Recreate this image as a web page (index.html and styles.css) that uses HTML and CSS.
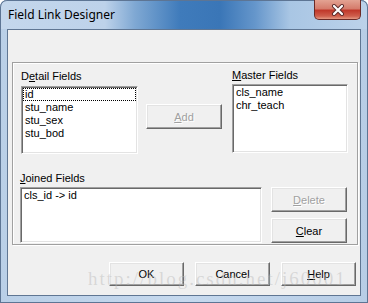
FILE: index.html
```html
<!DOCTYPE html>
<html lang="en">
<head>
    <meta charset="UTF-8">
    <title>Field Link Designer</title>
    <link rel="stylesheet" href="styles.css">
</head>
<body>

    <div class="window">
        <!-- title bar -->
        <div class="titlebar">
            <span class="title">Field Link Designer</span>
            <div class="close">
                <svg width="14" height="12" viewBox="0 0 14 12">
                    <path d="M3 2 L11 10 M11 2 L3 10" stroke="#5a2b2b" stroke-width="4" stroke-linecap="round"/>
                    <path d="M3 2 L11 10 M11 2 L3 10" stroke="#fff" stroke-width="2.2" stroke-linecap="round"/>
                </svg>
            </div>
        </div>

        <!-- client area -->
        <div class="client">
            <div class="panel">
                <div class="row top">
                    <div class="col detail">
                        <div class="label">D<u>e</u>tail Fields</div>
                        <div class="list detail-list">
                            <div class="item focus">id</div>
                            <div class="item">stu_name</div>
                            <div class="item">stu_sex</div>
                            <div class="item">stu_bod</div>
                        </div>
                    </div>
                    <button class="btn add" disabled><u>A</u>dd</button>
                    <div class="col master">
                        <div class="label"><u>M</u>aster Fields</div>
                        <div class="list master-list">
                            <div class="item">cls_name</div>
                            <div class="item">chr_teach</div>
                        </div>
                    </div>
                </div>
                <div class="row bottom">
                    <div class="col joined">
                        <div class="label"><u>J</u>oined Fields</div>
                        <div class="list joined-list">
                            <div class="item">cls_id -&gt; id</div>
                        </div>
                    </div>
                    <div class="side-buttons">
                        <button class="btn" disabled><u>D</u>elete</button>
                        <button class="btn"><u>C</u>lear</button>
                    </div>
                </div>
            </div>

            <div class="actions">
                <button class="btn">OK</button>
                <button class="btn">Cancel</button>
                <button class="btn"><u>H</u>elp</button>
            </div>
        </div>

        <!-- watermark -->
        <div class="watermark">http://blog.csdn.net/j60001</div>
    </div>

</body>
</html>
```

FILE: styles.css
```css
/* window */
body {
    margin: 0;
    width: 368px;
    height: 303px;
    overflow: hidden;
    background: #fff;
}

.window {
    position: relative;
    width: 368px;
    height: 303px;
    box-sizing: border-box;
    display: flex;
    flex-direction: column;
    background: linear-gradient(to right, #b9cfe7, #c6d9ee 50%, #b7cde6);
    border-radius: 7px 7px 0 0;
    box-shadow: inset 0 0 0 1px #5d7594;
    overflow: hidden;
}

/* title bar */
.titlebar {
    height: 29px;
    display: flex;
    justify-content: space-between;
    align-items: flex-start;
    background: linear-gradient(to right, #c4d7ec 0, #bdd2ea 105px, #7fa8d3 135px, #3f7bbb 180px, #3a76b7 220px, #6596cb 255px, #a9c6e4 290px, #bcd2ea 368px);
    border-radius: 7px 7px 0 0;
    box-shadow: inset 0 1px 0 #5d7594, inset 1px 0 0 #5d7594, inset -1px 0 0 #5d7594;
}
.title {
    font-family: "Noto Sans", sans-serif;
    font-size: 12px;
    color: #000;
    padding: 6px 0 0 8px;
    line-height: 17px;
}
.close {
    width: 47px;
    height: 20px;
    margin-right: 7px;
    box-sizing: border-box;
    display: flex;
    align-items: center;
    justify-content: center;
    border: 1px solid #6b2a26;
    border-top: none;
    border-radius: 0 0 5px 5px;
    background: linear-gradient(#e3a393 0, #d57c6c 45%, #c0392b 55%, #cf5f4d 85%, #e49a84 100%);
}

/* client */
.client {
    margin: 0 7px;
    height: 267px;
    box-sizing: border-box;
    border: 1px solid #5f7693;
    background: #f0f0f0;
    font-family: "Liberation Sans", Arial, sans-serif;
    font-size: 11px;
    color: #000;
}

.panel {
    margin: 32px 2px 0 4px;
    height: 183px;
    box-sizing: border-box;
    border: 1px solid #a0a0a0;
    box-shadow: inset 1px 1px #fff, 1px 1px #fff;
}

.row {
    display: flex;
    align-items: flex-start;
}
.row.bottom {
    margin-top: 18px;
}

.col {
    display: flex;
    flex-direction: column;
}
.label {
    height: 13px;
    line-height: 13px;
    white-space: nowrap;
}

.detail { margin-left: 8px; padding-top: 7px; width: 117px; gap: 3px; }
.master { margin-left: 10px; padding-top: 6px; width: 116px; gap: 2px; }
.joined { margin-left: 7px; width: 242px; gap: 2px; }

/* list boxes */
.list {
    background: #fff;
    box-sizing: border-box;
    border: 1px solid;
    border-color: #a0a0a0 #fff #fff #a0a0a0;
    box-shadow: inset 1px 1px #696969, inset -1px -1px #e3e3e3;
    padding: 1px;
}
.detail-list { height: 68px; }
.master-list { height: 69px; }
.joined-list { height: 56px; }

.item {
    height: 13px;
    line-height: 13px;
    padding-left: 2px;
    white-space: nowrap;
}
.item.focus {
    box-sizing: border-box;
    outline: 1px dotted #000;
    outline-offset: -1px;
    padding-left: 2px;
}

/* buttons */
.btn {
    width: 76px;
    height: 25px;
    box-sizing: border-box;
    padding: 0;
    margin: 0;
    font-family: "Liberation Sans", Arial, sans-serif;
    font-size: 11px;
    color: #000;
    background: #f0f0f0;
    border: 1px solid;
    border-color: #fff #696969 #696969 #fff;
    box-shadow: inset -1px -1px #a0a0a0, inset 1px 1px #e3e3e3;
    border-radius: 0;
}
.btn:disabled {
    color: #a0a0a0;
    text-shadow: 1px 1px #fff;
}
.add {
    margin-left: 8px;
    margin-top: 41px;
}

.side-buttons {
    margin-left: 9px;
    padding-top: 15px;
    display: flex;
    flex-direction: column;
    gap: 6px;
}

.actions {
    margin-top: 17px;
    padding-right: 4px;
    display: flex;
    justify-content: flex-end;
    gap: 11px;
}
.actions .btn {
    width: 75px;
    height: 24px;
}

/* watermark */
.watermark {
    position: absolute;
    left: 88px;
    top: 268px;
    font-family: "Liberation Serif", serif;
    font-size: 19px;
    letter-spacing: 2px;
    color: rgba(185, 185, 185, 0.45);
    white-space: nowrap;
    pointer-events: none;
}
```
